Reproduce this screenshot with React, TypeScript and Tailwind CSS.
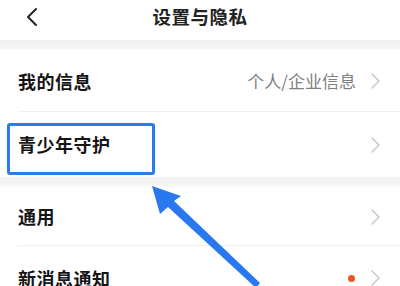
import React from "react";

const font = { fontFamily: '"Noto Sans CJK SC", "Noto Sans", sans-serif' };

function Chevron({ className = "" }: { className?: string }) {
  return (
    <svg width="11" height="18" viewBox="0 0 11 18" className={className}>
      <path d="M2 2 L9 9 L2 16" fill="none" stroke="#c8c8c8" strokeWidth="1.5" strokeLinecap="round" strokeLinejoin="round" />
    </svg>
  );
}

function Row({ label, right, dot, sep, h }: { label: string; right?: string; dot?: boolean; sep?: boolean; h: string }) {
  return (
    <div className={`relative flex items-center pl-[18px] pr-[19px] ${h}`}>
      <span className="text-[18px] text-[#151515] font-semibold tracking-[0.5px]">{label}</span>
      <div className="ml-auto flex items-center gap-[14px]">
        {right && <span className="text-[17px] text-[#808080]">{right}</span>}
        {dot && <span className="w-[7px] h-[7px] rounded-full bg-[#f0521f] mr-[1px]" />}
        <Chevron />
      </div>
      {sep && <div className="absolute left-[18px] right-0 bottom-0 h-px bg-[#f0f0f0]" />}
    </div>
  );
}

export default function App() {
  return (
    <div className="relative w-[400px] h-[286px] overflow-hidden bg-white" style={font}>
      <div className="relative h-[40px] flex items-center justify-center">
        <svg className="absolute left-[24px] top-[6px]" width="16" height="22" viewBox="0 0 16 22">
          <path d="M12 3 L4 11 L12 19" fill="none" stroke="#222" strokeWidth="2" strokeLinecap="round" strokeLinejoin="round" />
        </svg>
        <span className="text-[18.5px] font-bold text-[#222] -mt-[6px] tracking-[0.5px]">设置与隐私</span>
      </div>
      <div className="h-[10px] bg-gradient-to-b from-[#f0f0f0] to-[#f7f7f7]" />
      <Row label="我的信息" right="个人/企业信息" sep h="h-[62px]" />
      <Row label="青少年守护" h="h-[65px]" />
      <div className="h-[10px] bg-gradient-to-b from-[#f3f1f1] to-[#f8f8f8]" />
      <Row label="通用" sep h="h-[59px]" />
      <Row label="新消息通知" dot h="h-[64px]" />

      <div className="absolute left-[7px] top-[123px] w-[148px] h-[52px] border-[3px] border-[#2b7bef] rounded-[3px]" />
      <svg className="absolute left-0 top-0 pointer-events-none" width="400" height="286" viewBox="0 0 400 286">
        <path d="M152 186 L181 196 L174 201 L260 283 L256 288 L168 207 L160 214 Z" fill="#2a78f0" />
      </svg>
    </div>
  );
}
